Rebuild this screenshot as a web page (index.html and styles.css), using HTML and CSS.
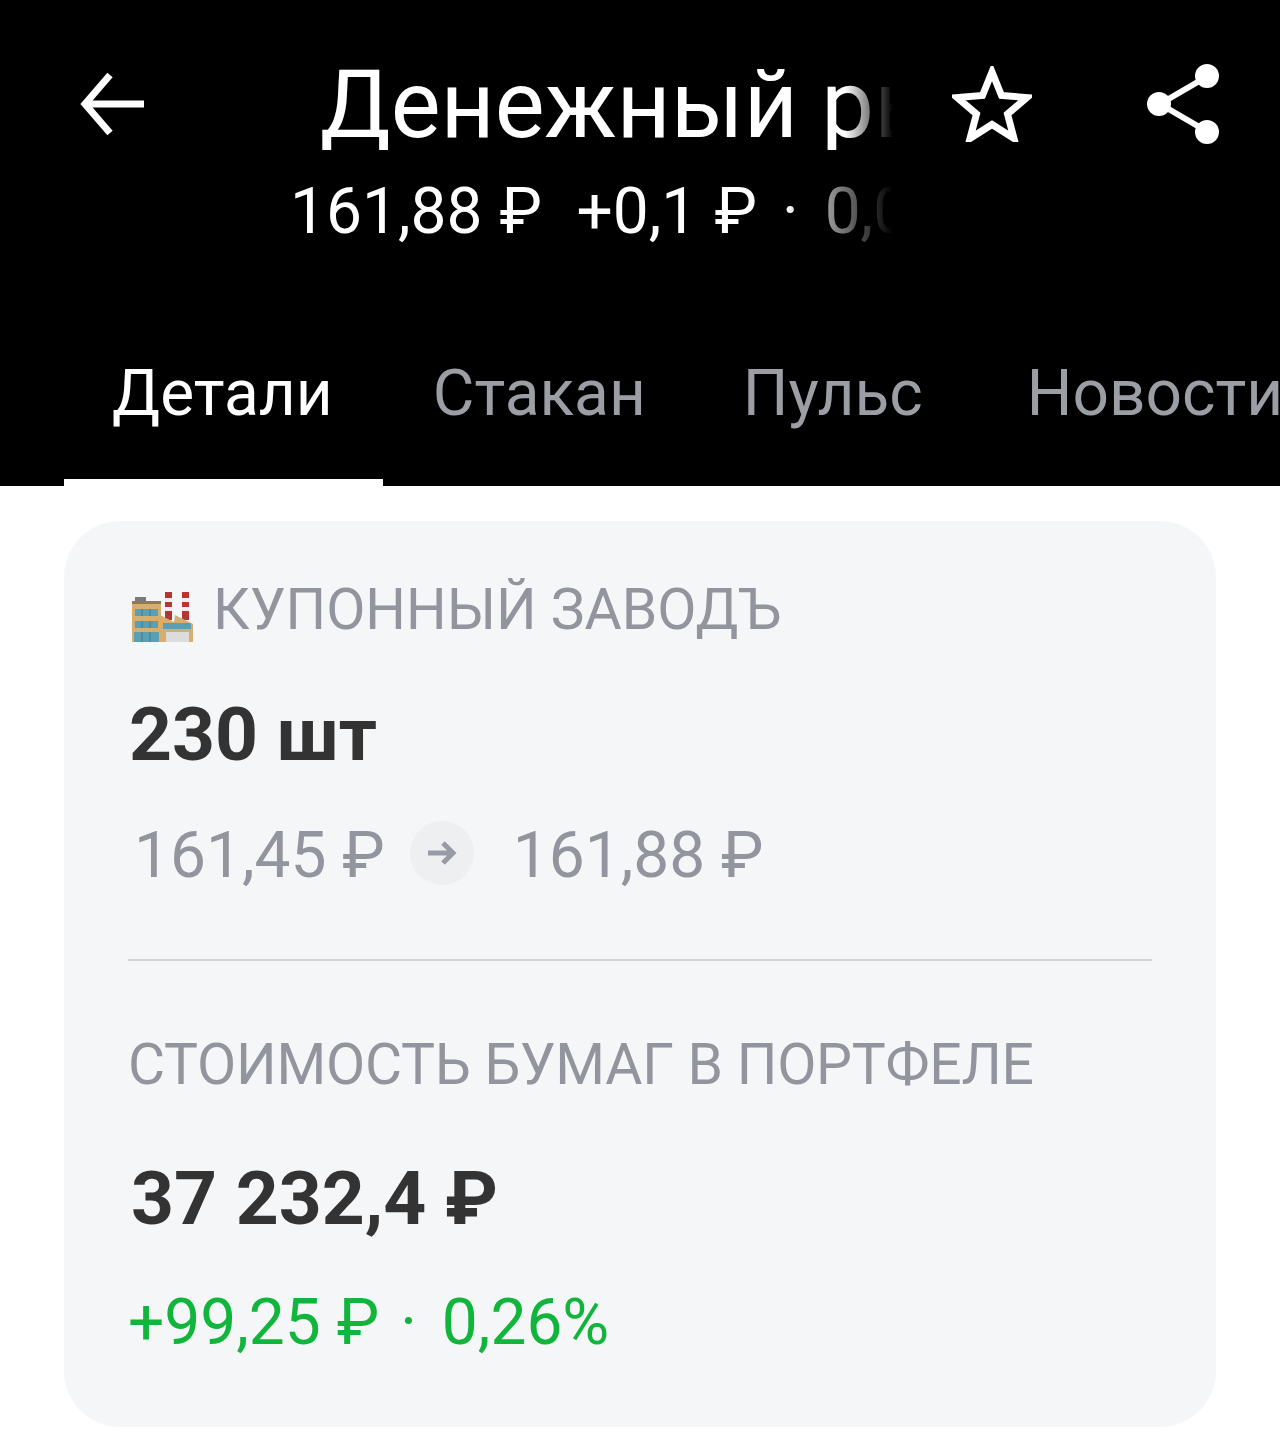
FILE: index.html
```html
<!DOCTYPE html>
<html lang="ru">
<head>
  <meta charset="UTF-8" />
  <title>Денежный рынок</title>
  <link rel="stylesheet" href="styles.css">
</head>
<body>

  <header class="header">
    <div class="topbar">
      <button class="icon-btn back">
        <svg width="68" height="64" viewBox="0 0 68 64"><path d="M65 32H6M31 3L6 32l25 29" fill="none" stroke="#fff" stroke-width="7"/></svg>
      </button>
      <div class="title-box">
        <div class="title">Денежный рынок</div>
        <div class="subtitle">161,88 ₽&nbsp; +0,1 ₽<span class="sep">·</span>0,06%</div>
      </div>
      <button class="icon-btn star">
        <svg width="80" height="76" viewBox="0 0 80 76"><path d="M40 6l9.500 23.500 25.500 2-19.500 16.500 6.500 24.500-22-14-22 14 6.500-24.500L5 31.500l25.500-2z" fill="none" stroke="#fff" stroke-width="7"/></svg>
      </button>
      <button class="icon-btn share">
        <svg width="74" height="82" viewBox="0 0 74 82"><path d="M61 13L13 41l48 28" fill="none" stroke="#fff" stroke-width="6"/><circle cx="60" cy="13" r="12" fill="#fff"/><circle cx="12" cy="41" r="12" fill="#fff"/><circle cx="60" cy="69" r="12" fill="#fff"/></svg>
      </button>
    </div>
    <nav class="tabs">
      <div class="tab active">Детали</div>
      <div class="tab">Стакан</div>
      <div class="tab">Пульс</div>
      <div class="tab">Новости</div>
    </nav>
  </header>

  <main class="card">
    <div class="label">
      <svg class="factory" width="62" height="52" viewBox="0 0 62 52">
        <rect x="33" y="1" width="7" height="28" fill="#b8352f"/>
        <rect x="33" y="7" width="7" height="4" fill="#eee"/>
        <rect x="33" y="16" width="7" height="4" fill="#eee"/>
        <rect x="50" y="1" width="7" height="28" fill="#b8352f"/>
        <rect x="50" y="7" width="7" height="4" fill="#eee"/>
        <rect x="50" y="16" width="7" height="4" fill="#eee"/>
        <path d="M28 51V24l14 7 1-7 18 9v18z" fill="#d8ae6c"/>
        <rect x="0" y="11" width="29" height="40" fill="#d8ae6c"/>
        <rect x="0" y="10" width="29" height="3" fill="#8d7a58"/>
        <rect x="3" y="6" width="11" height="4" fill="#7a7a7a"/>
        <path d="M3 18h23v7H3zM3 30h23v7H3zM2 41h25v10H2z" fill="#5b9fb5"/>
        <path d="M10 18v7M18 18v7M10 30v7M18 30v7M10 41v10M18 41v10" stroke="#3d7a8c" stroke-width="1"/>
        <rect x="31" y="32" width="28" height="6" fill="#5b9fb5"/>
        <rect x="34" y="41" width="23" height="10" fill="#dcdcdc"/>
      </svg>
      <span>КУПОННЫЙ ЗАВОДЪ</span>
    </div>
    <div class="big qty">230 шт</div>
    <div class="prices">
      <span>161,45 ₽</span>
      <span class="arrow">
        <svg width="32" height="28" viewBox="0 0 32 28"><path d="M2 14h25M17 4l10 10-10 10" fill="none" stroke="#979ba3" stroke-width="5"/></svg>
      </span>
      <span>161,88 ₽</span>
    </div>
    <hr class="divider">
    <div class="label value-label">СТОИМОСТЬ БУМАГ В ПОРТФЕЛЕ</div>
    <div class="big total">37 232,4 ₽</div>
    <div class="change">+99,25 ₽<span class="sep">·</span>0,26%</div>
  </main>

</body>
</html>
```

FILE: styles.css
```css
* {
  box-sizing: border-box;
}

body {
  margin: 0;
  background: #fff;
  font-family: Roboto, "Noto Sans", sans-serif;
  color: #333;
  overflow: hidden;
}

.header {
  background: #000;
  color: #fff;
  height: 486px;
  padding-top: 60px;
}

.topbar {
  display: flex;
  align-items: flex-start;
  height: 250px;
}

.icon-btn {
  background: none;
  border: none;
  padding: 0;
  display: flex;
}

.back {
  margin-left: 79px;
  margin-top: 12px;
}

.title-box {
  width: 605px;
  margin-left: 141px;
  white-space: nowrap;
}

.title {
  font-size: 94px;
  line-height: 90px;
  padding-left: 32px;
  overflow: hidden;
  -webkit-mask-image: linear-gradient(to right, #000 92%, transparent 100%);
  mask-image: linear-gradient(to right, #000 92%, transparent 100%);
}

.subtitle {
  font-size: 64px;
  line-height: 72px;
  margin-top: 26px;
  padding-left: 2px;
  word-spacing: 1.3px;
  overflow: hidden;
  -webkit-mask-image: linear-gradient(to right, #000 82%, transparent 100%);
  mask-image: linear-gradient(to right, #000 82%, transparent 100%);
}

.sep {
  display: inline-block;
  margin: 0 26px 0 25px;
}

.star {
  margin-left: 59px;
  margin-top: 6px;
}

.share {
  margin-left: 115px;
  margin-top: 3px;
}

.tabs {
  display: flex;
  padding-left: 64px;
  white-space: nowrap;
  overflow: hidden;
}

.tab {
  font-size: 64px;
  line-height: 80px;
  height: 176px;
  padding: 44px 50px 0;
  color: #9b9ea4;
}

.tab:nth-child(3) {
  padding-left: 47px;
}

.tab:last-child {
  padding-left: 54px;
}

.tab.active {
  padding-left: 48px;
  color: #fff;
  border-bottom: 7px solid #fff;
}

.card {
  margin: 35px 64px 0;
  height: 906px;
  background: #f5f6f8;
  border-radius: 56px;
  padding: 56px 64px 0;
}

.label {
  display: flex;
  align-items: center;
  gap: 19px;
  font-size: 57px;
  line-height: 64px;
  color: #92959d;
}

.factory {
  flex: none;
  margin-left: 4px;
  margin-top: 14px;
}

.big {
  font-size: 75px;
  font-weight: 700;
  line-height: 90px;
  color: #333;
}

.qty {
  margin-top: 46px;
  margin-left: 1px;
}

.prices {
  display: flex;
  align-items: center;
  gap: 32px;
  margin-top: 37px;
  margin-left: 6px;
  font-size: 64px;
  line-height: 80px;
  color: #92959d;
}

.arrow {
  width: 64px;
  height: 64px;
  margin: -6px 7px 0 -7px;
  border-radius: 50%;
  background: #eeeff1;
  display: flex;
  align-items: center;
  justify-content: center;
}

.divider {
  border: none;
  border-top: 2px solid #d3d5d9;
  margin: 63px 0 0;
}

.value-label {
  margin-top: 72px;
  letter-spacing: -0.25px;
}

.total {
  margin-top: 56px;
  margin-left: 3px;
}

.change {
  margin-top: 40px;
  font-size: 64px;
  line-height: 80px;
  color: #11b53c;
}

.change .sep {
  margin: 0 25px 0 21px;
}
```
